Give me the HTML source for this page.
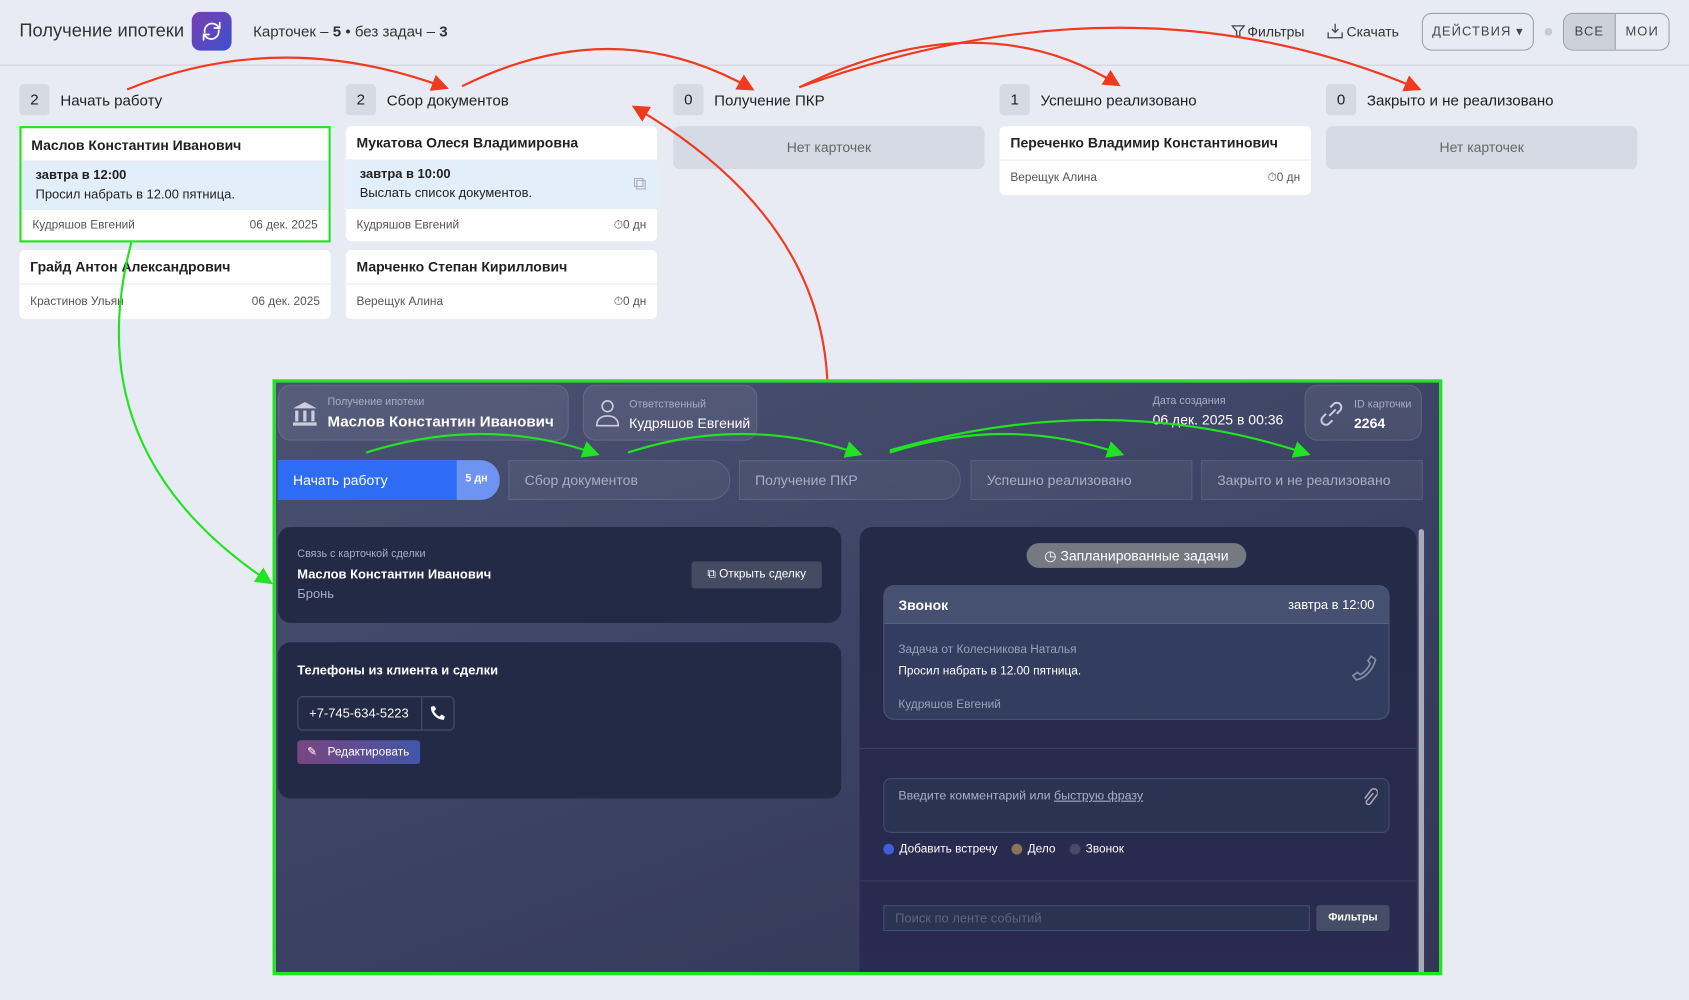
<!DOCTYPE html>
<html><head><meta charset="utf-8"><style>
*{box-sizing:border-box;margin:0;padding:0}
html,body{width:1689px;height:1000px;overflow:hidden;background:#e8ebf3}
#w{position:absolute;left:0;top:0;width:1568px;height:928px;transform:scale(1.07717,1.07759);transform-origin:0 0;font-family:"Liberation Sans","Noto Sans CJK SC",sans-serif;color:#222}
.a{position:absolute}
.hdr{left:0;top:0;width:1568px;height:61px;border-bottom:1px solid #cfd3dc}
.badge{width:28px;height:29px;background:#d6dae3;border-radius:4px;font-size:14px;text-align:center;line-height:29px}
.ct{font-size:14px}
.card{background:#fff;border-radius:5px;width:289px;overflow:hidden}
.nm{font-size:13px;font-weight:bold;padding:0 10px;height:32px;line-height:32px;border-bottom:1px solid #e6e8ee}
.task{background:#e3eefb;height:45px;padding:5px 13px;font-size:12px;position:relative}
.task b{display:block;margin-bottom:4px}
.ft{height:30px;padding:0 10px;font-size:11px;color:#555;display:flex;justify-content:space-between;align-items:center}
.empty{width:289px;height:40px;background:#d6dae5;border-radius:6px;text-align:center;line-height:40px;font-size:13px;color:#666}
.dark{left:253px;top:352px;width:1086px;height:553px;border:3px solid #22e322;background:linear-gradient(160deg,#4a5171,#3b4263 50%,#333657);overflow:hidden}
.chip{background:rgba(255,255,255,.07);border:1px solid rgba(255,255,255,.1);border-radius:12px;height:52px}
.lab{font-size:10px;color:#a8aec4}
.val{font-size:14px;color:#fff;font-weight:bold}
.st{height:37px;top:72px;border:1px solid rgba(255,255,255,.1);background:rgba(255,255,255,.05);color:#a9aec2;font-size:13px;line-height:35px;padding-left:14px;border-radius:0 18px 18px 0}
.pan{background:#222a45;border-radius:12px}
.w{color:#fff}
</style></head><body><div id="w">
<div class="a hdr"></div>
<div class="a" style="left:18px;top:19px;font-size:17px;color:#333">Получение ипотеки</div>
<div class="a" style="left:178px;top:11px;width:37px;height:36px;border-radius:8px;background:linear-gradient(135deg,#7b3fb0,#3c4fd0)"><svg width="37" height="36" viewBox="0 0 37 36" fill="none" stroke="#fff" stroke-width="1.6" stroke-linecap="round"><path d="M12 19a7 7 0 0 1 12-6l2 2M26 10v5h-5M25 17a7 7 0 0 1-12 6l-2-2M11 26v-5h5"/></svg></div>
<div class="a" style="left:235px;top:21px;font-size:14px;color:#333">Карточек – <b>5</b> • без задач – <b>3</b></div>
<svg class="a" style="left:1143px;top:22px" width="13" height="14" fill="none" stroke="#444" stroke-width="1.2"><path d="M1 2h11L8 7v5l-3-1V7z"/></svg>
<div class="a" style="left:1158px;top:22px;font-size:13px;color:#333">Фильтры</div>
<svg class="a" style="left:1232px;top:21px" width="15" height="15" fill="none" stroke="#444" stroke-width="1.2"><path d="M7.5 1v8M4.5 6l3 3 3-3M1 9v5h13V9"/></svg>
<div class="a" style="left:1250px;top:22px;font-size:13px;color:#333">Скачать</div>
<div class="a" style="left:1320px;top:12px;width:104px;height:35px;border:1px solid #9aa0ad;border-radius:9px;font-size:12px;letter-spacing:1px;color:#444;text-align:center;line-height:33px">ДЕЙСТВИЯ ▾</div>
<div class="a" style="left:1434px;top:26px;width:7px;height:7px;border-radius:50%;background:#c5c9d2"></div>
<div class="a" style="left:1451px;top:12px;width:99px;height:35px;border:1px solid #9aa0ad;border-radius:9px;overflow:hidden;font-size:12px;letter-spacing:1px;color:#444;display:flex"><div style="width:48px;background:#cdd1da;text-align:center;line-height:33px;border-right:1px solid #9aa0ad">ВСЕ</div><div style="flex:1;text-align:center;line-height:33px">МОИ</div></div>

<div class="a badge" style="left:18px;top:78px">2</div><div class="a ct" style="left:56px;top:85px">Начать работу</div>
<div class="a badge" style="left:321px;top:78px">2</div><div class="a ct" style="left:359px;top:85px">Сбор документов</div>
<div class="a badge" style="left:625px;top:78px">0</div><div class="a ct" style="left:663px;top:85px">Получение ПКР</div>
<div class="a badge" style="left:928px;top:78px">1</div><div class="a ct" style="left:966px;top:85px">Успешно реализовано</div>
<div class="a badge" style="left:1231px;top:78px">0</div><div class="a ct" style="left:1269px;top:85px">Закрыто и не реализовано</div>

<div class="a card" style="left:18px;top:117px;border:2px solid #22e322;border-radius:0"><div class="nm" style="padding-left:9px;height:31px;line-height:31px">Маслов Константин Иванович</div><div class="task"><b>завтра в 12:00</b>Просил набрать в 12.00 пятница.</div><div class="ft" style="height:28px"><span>Кудряшов Евгений</span><span>06 дек. 2025</span></div></div>
<div class="a card" style="left:18px;top:232px"><div class="nm">Грайд Антон Александрович</div><div class="ft" style="height:32px"><span>Крастинов Ульян</span><span>06 дек. 2025</span></div></div>
<div class="a card" style="left:321px;top:117px"><div class="nm">Мукатова Олеся Владимировна</div><div class="task"><b>завтра в 10:00</b>Выслать список документов.<span style="position:absolute;right:10px;top:12px;color:#aab;font-size:17px">⧉</span></div><div class="ft"><span>Кудряшов Евгений</span><span>⏱0 дн</span></div></div>
<div class="a card" style="left:321px;top:232px"><div class="nm">Марченко Степан Кириллович</div><div class="ft" style="height:32px"><span>Верещук Алина</span><span>⏱0 дн</span></div></div>
<div class="a empty" style="left:625px;top:117px">Нет карточек</div>
<div class="a card" style="left:928px;top:117px"><div class="nm">Переченко Владимир Константинович</div><div class="ft" style="height:32px"><span>Верещук Алина</span><span>⏱0 дн</span></div></div>
<div class="a empty" style="left:1231px;top:117px">Нет карточек</div>

<div class="a dark">
 <div class="a chip" style="left:2px;top:2px;width:270px"><svg class="a" style="left:12px;top:14px" width="24" height="24" fill="#ccd"><path d="M12 1L1 7h22z"/><rect x="3" y="9" width="3" height="10"/><rect x="10.5" y="9" width="3" height="10"/><rect x="18" y="9" width="3" height="10"/><rect x="1" y="20" width="22" height="3"/></svg><div class="a lab" style="left:45px;top:10px">Получение ипотеки</div><div class="a val" style="left:45px;top:25px">Маслов Константин Иванович</div></div>
 <div class="a chip" style="left:285px;top:2px;width:162px"><svg class="a" style="left:10px;top:11px" width="24" height="28" fill="none" stroke="#ccd" stroke-width="1.5"><circle cx="12" cy="8" r="5"/><path d="M2 26c0-6 4-9 10-9s10 3 10 9z"/></svg><div class="a lab" style="left:42px;top:12px">Ответственный</div><div class="a val" style="left:42px;top:27px;font-weight:normal;font-size:13px">Кудряшов Евгений</div></div>
 <div class="a lab" style="left:814px;top:12px">Дата создания</div><div class="a" style="left:814px;top:27px;color:#fff;font-size:13px">06 дек. 2025 в 00:36</div>
 <div class="a chip" style="left:955px;top:2px;width:109px"><svg class="a" style="left:10px;top:12px" width="28" height="28" fill="none" stroke="#ccd" stroke-width="1.8"><path d="M12 16l6-6M9 14l-3 3a4 4 0 0 0 6 6l3-3M19 14l3-3a4 4 0 0 0-6-6l-3 3"/></svg><div class="a lab" style="left:45px;top:12px">ID карточки</div><div class="a val" style="left:45px;top:27px;font-size:13px">2264</div></div>
 <div class="a" style="left:2px;top:72px;width:206px;height:37px;border-radius:0 18px 18px 0;background:#6e93f0;overflow:hidden"><div style="width:166px;height:37px;background:#2f6cf5;color:#fff;font-size:13px;line-height:37px;padding-left:14px">Начать работу</div><div class="a w" style="left:174px;top:12px;font-size:10px;font-weight:bold">5 дн</div></div>
 <div class="a st" style="left:216px;width:206px">Сбор документов</div>
 <div class="a st" style="left:430px;width:206px">Получение ПКР</div>
 <div class="a st" style="left:645px;width:206px;border-radius:0">Успешно реализовано</div>
 <div class="a st" style="left:859px;width:206px;border-radius:0">Закрыто и не реализовано</div>
 <div class="a pan" style="left:2px;top:134px;width:523px;height:89px"><div class="a lab" style="left:18px;top:20px">Связь с карточкой сделки</div><div class="a w" style="left:18px;top:37px;font-size:12px;font-weight:bold">Маслов Константин Иванович</div><div class="a" style="left:18px;top:55px;font-size:12px;color:#a8aec4">Бронь</div><div class="a w" style="left:384px;top:32px;width:121px;height:25px;background:#444b63;border-radius:3px;font-size:11px;line-height:25px;text-align:center">⧉ Открыть сделку</div></div>
 <div class="a pan" style="left:2px;top:241px;width:523px;height:145px"><div class="a w" style="left:18px;top:19px;font-size:12px;font-weight:bold">Телефоны из клиента и сделки</div><div class="a w" style="left:18px;top:50px;width:146px;height:32px;border:1px solid #48506a;border-radius:5px;font-size:12px;line-height:30px;padding-left:10px">+7-745-634-5223<span style="position:absolute;left:114px;top:0;width:1px;height:30px;background:#48506a"></span><svg style="position:absolute;left:123px;top:8px" width="14" height="14" fill="#fff"><path d="M13 10l-3-2-2 2c-2-1-4-3-5-5l2-2-2-3-3 1c0 7 6 12 12 12z"/></svg></div><div class="a w" style="left:18px;top:91px;width:114px;height:22px;border-radius:3px;background:linear-gradient(90deg,#7a4581,#4255a8);font-size:11px;line-height:22px;padding-left:28px">Редактировать<span style="position:absolute;left:9px">✎</span></div></div>
 <div class="a" style="left:542px;top:134px;width:517px;height:420px;background:linear-gradient(180deg,#242a47,#2a2a52);border-radius:12px 12px 0 0">
  <div class="a w" style="left:155px;top:15px;width:204px;height:23px;border-radius:12px;background:#767982;font-size:13px;text-align:center;line-height:23px">◷ Запланированные задачи</div>
  <div class="a" style="left:22px;top:54px;width:470px;height:125px;border:1px solid #4c5677;border-radius:10px;background:#323d5f;overflow:hidden"><div style="height:35px;background:#465172;border-bottom:1px solid #5a6486;padding:0 13px;display:flex;justify-content:space-between;align-items:center;color:#fff;font-size:12px"><b style="font-size:13px">Звонок</b><span>завтра в 12:00</span></div><div class="a" style="left:13px;top:53px;font-size:11px;color:#9aa1b8">Задача от Колесникова Наталья</div><div class="a w" style="left:13px;top:73px;font-size:11px">Просил набрать в 12.00 пятница.</div><div class="a" style="left:13px;top:104px;font-size:11px;color:#9aa1b8">Кудряшов Евгений</div><svg class="a" style="left:432px;top:64px" width="26" height="26" fill="none" stroke="#8890a8" stroke-width="1.5"><path d="M24 4l-4-3-3 4 2 3c-2 4-5 8-9 10l-3-2-4 3 3 4c9-2 16-10 18-19z"/></svg></div>
  <div class="a" style="left:0;top:205px;width:517px;height:1px;background:#3a4060"></div>
  <div class="a" style="left:22px;top:233px;width:470px;height:51px;border:1px solid #444d6c;border-radius:7px;background:#2a3352"><div class="a" style="left:13px;top:10px;font-size:11.5px;color:#a8aec4">Введите комментарий или <u>быструю фразу</u></div><svg class="a" style="right:10px;top:8px" width="14" height="18" fill="none" stroke="#aab" stroke-width="1.4"><path d="M10 5l-6 7a2 2 0 0 0 3 3l6-8a3.5 3.5 0 0 0-5-5L2 10"/></svg></div>
  <div class="a w" style="left:22px;top:293px;font-size:11px;display:flex;align-items:center;gap:5px"><i style="width:10px;height:10px;border-radius:50%;background:#3e5fd8"></i>Добавить встречу<i style="width:10px;height:10px;border-radius:50%;background:#8a7557;margin-left:8px"></i>Дело<i style="width:10px;height:10px;border-radius:50%;background:#464c66;margin-left:8px"></i>Звонок</div>
  <div class="a" style="left:0;top:328px;width:517px;height:1px;background:#3a4060"></div>
  <div class="a" style="left:22px;top:351px;width:396px;height:24px;border:1px solid #444d6c;background:#2a3352;font-size:12px;color:#5d6584;line-height:22px;padding-left:10px">Поиск по ленте событий</div>
  <div class="a w" style="left:424px;top:351px;width:68px;height:24px;background:#464d66;border-radius:3px;font-size:10px;font-weight:bold;text-align:center;line-height:24px">Фильтры</div>
 </div>
 <div class="a" style="left:1061px;top:136px;width:5px;height:420px;background:#a8acb8;border-radius:3px"></div>
</div>

<svg class="a" style="left:0;top:0" width="1568" height="928" fill="none" stroke-width="2">
<defs><marker id="r" markerWidth="8" markerHeight="8" refX="6" refY="4" orient="auto"><path d="M0 0L8 4L0 8z" fill="#f03a1e"/></marker><marker id="g" markerWidth="8" markerHeight="8" refX="6" refY="4" orient="auto"><path d="M0 0L8 4L0 8z" fill="#22e322"/></marker></defs>
<g stroke="#f03a1e" marker-end="url(#r)">
<path d="M118 83Q260 25 413 81"/>
<path d="M429 80Q570 10 697 82"/>
<path d="M742 81Q910 0 1037 78"/>
<path d="M742 81Q1050 -30 1316 82"/>
<path d="M768 352Q760 200 590 100"/>
</g>
<g stroke="#22e322" marker-end="url(#g)">
<path d="M122 225Q70 420 250 540"/>
<path d="M340 420Q450 385 553 421"/>
<path d="M583 420Q690 385 797 421"/>
<path d="M826 420Q935 385 1040 421"/>
<path d="M826 418Q1030 360 1213 421"/>
</g>
</svg>
</div></body></html>
